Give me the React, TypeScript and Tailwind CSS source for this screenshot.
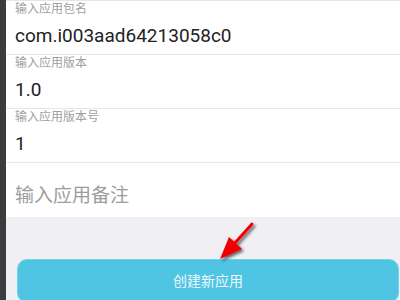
import React from 'react';

interface FieldProps {
  label: string;
  value: string;
}

const font = { fontFamily: 'Roboto, "Noto Sans CJK SC", sans-serif' };

const Field: React.FC<FieldProps> = ({ label, value }) => (
  <div className="border-t border-[#e6e6e6]">
    <div className="h-4 pl-[9px] text-[12px] leading-4 text-[#a0a0a0]">{label}</div>
    <div className="h-[37px] pl-[9px] text-[19px] leading-[37px] text-[#222222]">{value}</div>
  </div>
);

export default function App() {
  return (
    <div className="relative flex h-[300px] w-[400px] overflow-hidden bg-[#efeff4]" style={font}>
      <div className="w-[6px] shrink-0 bg-[#3c3c3c]" />
      <div className="flex flex-1 flex-col">
        <div className="bg-white">
          <Field label="输入应用包名" value="com.i003aad64213058c0" />
          <Field label="输入应用版本" value="1.0" />
          <Field label="输入应用版本号" value="1" />
          <div className="h-[55px] border-t border-[#e6e6e6] pl-[9px] pt-[21px] text-[19px] leading-6 text-[#9c9c9c]">
            输入应用备注
          </div>
        </div>
        <div className="mt-[42px] ml-[11px] mr-[1px] flex h-[44px] shrink-0 items-center justify-center rounded-[10px] border border-[#74d0ea] bg-[#4fc4e3] text-[14px] text-[#eef9fc]">
          创建新应用
        </div>
      </div>
      <svg className="absolute left-[212px] top-[218px]" width="50" height="50" viewBox="0 0 50 50">
        <defs>
          <filter id="sh" x="-50%" y="-50%" width="200%" height="200%">
            <feGaussianBlur in="SourceAlpha" stdDeviation="1.5" />
            <feOffset dx="2" dy="2" result="b" />
            <feComponentTransfer>
              <feFuncA type="linear" slope="0.6" />
            </feComponentTransfer>
            <feMerge>
              <feMergeNode />
              <feMergeNode in="SourceGraphic" />
            </feMerge>
          </filter>
        </defs>
        <g filter="url(#sh)">
          <line x1="40" y1="6" x2="22" y2="26" stroke="#ee0000" strokeWidth="3" strokeLinecap="round" />
          <polygon points="8,41 17,19 30,31" fill="#ee0000" />
        </g>
      </svg>
    </div>
  );
}
